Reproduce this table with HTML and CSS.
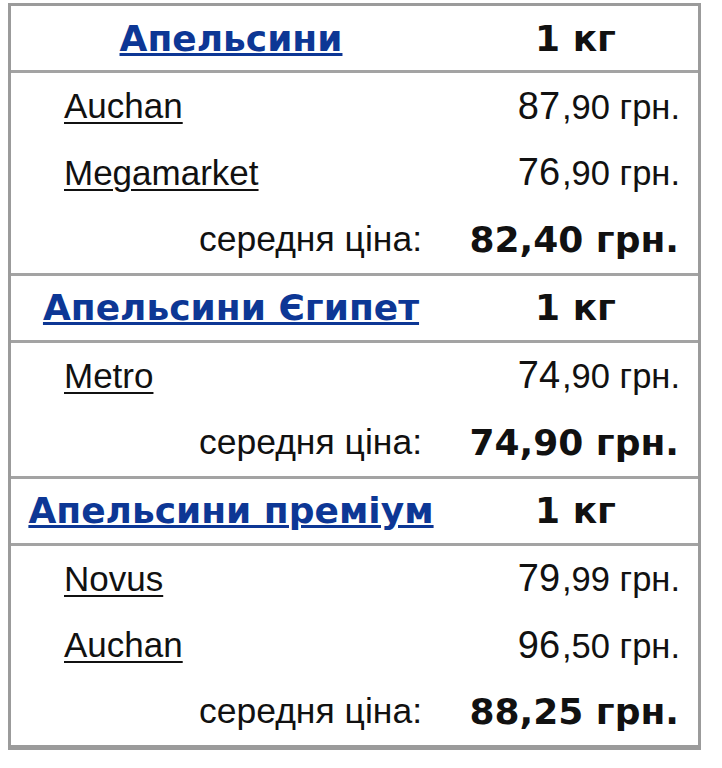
FILE: index.html
```html
<!DOCTYPE html>
<html lang="uk">
<head>
<meta charset="utf-8">
<title>Апельсини</title>
<link rel="stylesheet" href="styles.css">
</head>
<body>
<div class="board">
  <div class="sec">
    <div class="row head"><div class="c1"><a href="#">Апельсини</a></div><div class="c2">1 кг</div></div>
    <div class="row item"><div class="c1"><a href="#">Auchan</a></div><div class="c2 price"><span class="int">87</span>,90 грн.</div></div>
    <div class="row item"><div class="c1"><a href="#">Megamarket</a></div><div class="c2 price"><span class="int">76</span>,90 грн.</div></div>
    <div class="row avg"><div class="c1 lbl">середня ціна:</div><div class="c2 avgp">82,40 грн.</div></div>
  </div>
  <div class="sec">
    <div class="row head"><div class="c1"><a href="#">Апельсини Єгипет</a></div><div class="c2">1 кг</div></div>
    <div class="row item"><div class="c1"><a href="#">Metro</a></div><div class="c2 price"><span class="int">74</span>,90 грн.</div></div>
    <div class="row avg"><div class="c1 lbl">середня ціна:</div><div class="c2 avgp">74,90 грн.</div></div>
  </div>
  <div class="sec">
    <div class="row head"><div class="c1"><a href="#">Апельсини преміум</a></div><div class="c2">1 кг</div></div>
    <div class="row item"><div class="c1"><a href="#">Novus</a></div><div class="c2 price"><span class="int">79</span>,99 грн.</div></div>
    <div class="row item"><div class="c1"><a href="#">Auchan</a></div><div class="c2 price"><span class="int">96</span>,50 грн.</div></div>
    <div class="row avg"><div class="c1 lbl">середня ціна:</div><div class="c2 avgp">88,25 грн.</div></div>
  </div>
</div>
</body>
</html>
```
FILE: styles.css
```css
html, body {
  margin: 0;
  padding: 0;
  background: #ffffff;
}
body {
  padding: 3px 0 0 8px;
  font-family: "Liberation Sans", Arial, sans-serif;
  color: #111111;
}
.board {
  width: 687px;
  border: 3px solid #9b9b9b;
  border-bottom-width: 5px;
  background: #ffffff;
}
.sec + .sec {
  border-top: 3px solid #a3a3a3;
}
.row {
  display: flex;
  align-items: center;
}
.c1 {
  width: 440px;
  box-sizing: border-box;
}
.c2 {
  flex: 1;
  box-sizing: border-box;
}
.head {
  height: 64px;
  border-bottom: 3px solid #a3a3a3;
  font-family: "DejaVu Sans", Verdana, sans-serif;
  font-weight: bold;
  font-size: 36px;
}
.head .c1 {
  text-align: center;
}
.head .c1 a {
  color: #0d3795;
  text-decoration-thickness: 3px;
  text-underline-offset: 2px;
}
.head .c2 {
  text-align: center;
  color: #111111;
  padding-left: 2px;
}
.item, .avg {
  height: 66.5px;
}
.item .c1 {
  padding-left: 53px;
  font-size: 35px;
}
.item .c1 a {
  color: #111111;
  text-decoration-thickness: 2px;
  text-underline-offset: 4px;
}
.price {
  text-align: right;
  padding-right: 18px;
  font-size: 34.5px;
}
.price .int {
  font-size: 38px;
  margin-right: 2px;
}
.lbl {
  text-align: right;
  padding-right: 29px;
  font-size: 35.5px;
}
.avgp {
  text-align: right;
  padding-right: 19px;
  font-family: "DejaVu Sans", Verdana, sans-serif;
  font-weight: bold;
  font-size: 36px;
}
```
